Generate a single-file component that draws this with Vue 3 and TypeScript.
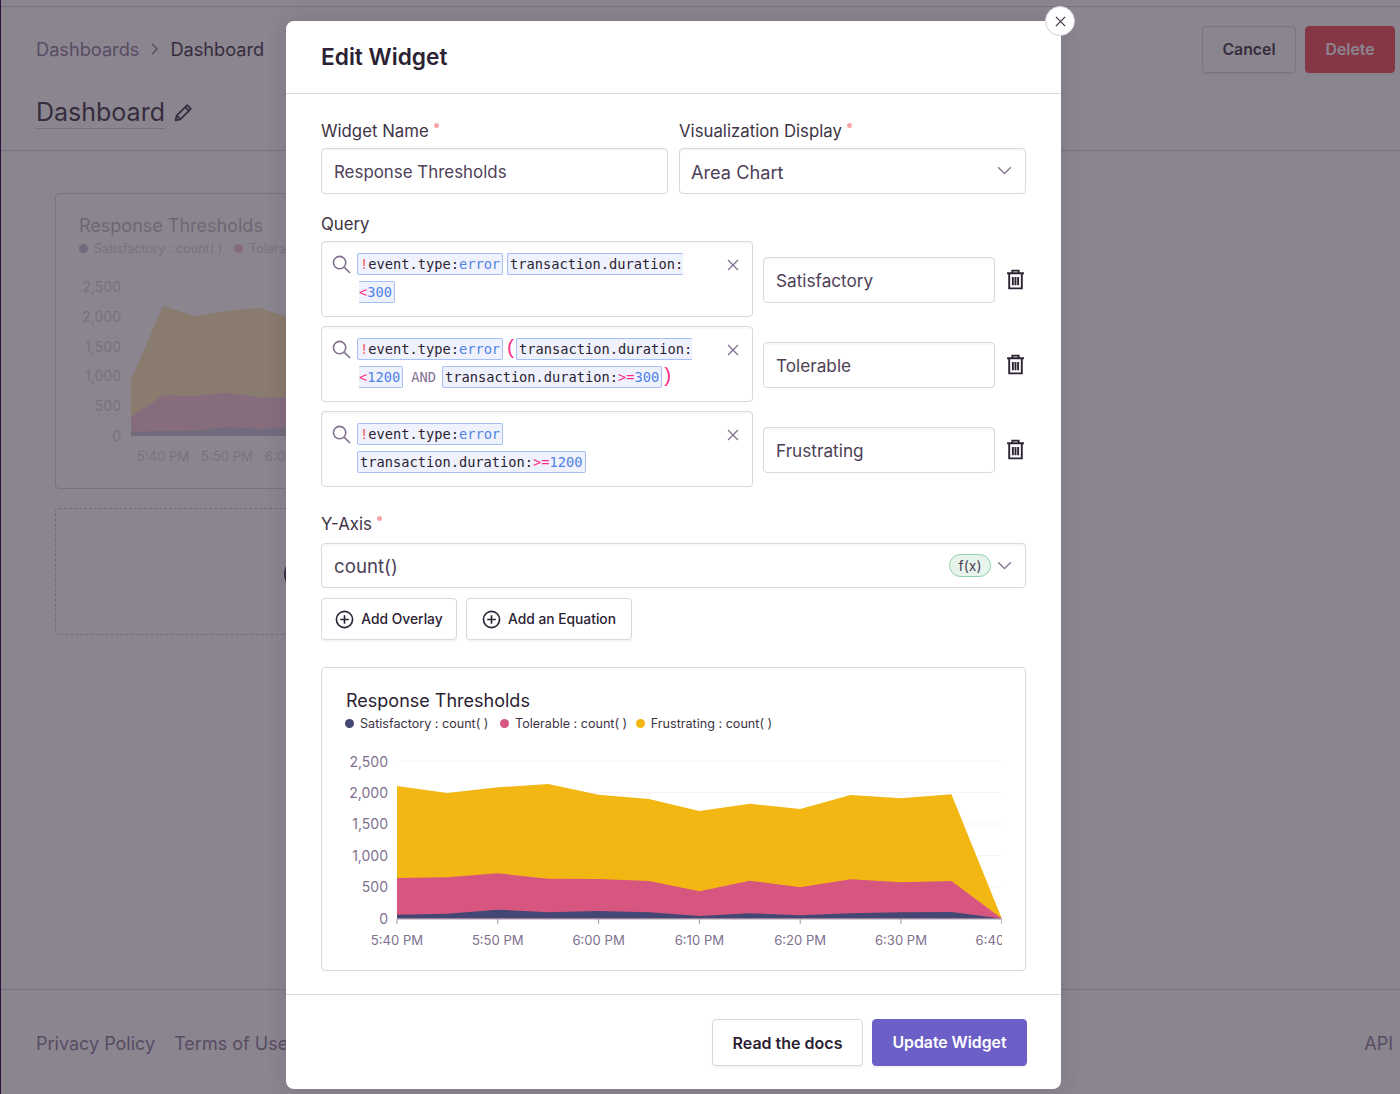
<template>
    <div class="page">
        <header class="top">
            <div class="top-left">
                <div class="crumbs">
                    <span class="crumb-link">Dashboards</span>
                    <svg class="crumb-arrow" viewBox="0 0 10 16"><path d="M2 2l6 6-6 6" /></svg>
                    <span>Dashboard</span>
                </div>
                <div class="title-row">
                    <h1>Dashboard</h1>
                    <svg class="pencil" viewBox="0 0 18 18">
                        <path d="M1.500 16.500l1-4.500L12.500 2l3.500 3.500-10 10z M10.500 4l3.500 3.500 M2.500 12L6 15.500" />
                    </svg>
                </div>
            </div>
            <div class="top-actions">
                <button class="btn cancel">Cancel</button>
                <button class="btn delete">Delete</button>
            </div>
        </header>

        <main class="grid">
            <section class="widget">
                <div class="widget-inner">
                    <div class="widget-title">Response Thresholds</div>
                    <div class="legend small">
                        <span class="dot navy"></span>Satisfactory : count( )
                        <span class="dot pink"></span>Tolerable : count( )
                    </div>
                    <svg class="bg-chart" viewBox="56 268 420 200">
                        <text v-for="(label, i) in yLabels" :key="label" x="121" :y="292 + i * 29.8" text-anchor="end">{{ label }}</text>
                        <polygon class="fill-yellow" :points="area(bgX, bgYellow, 435.7)" />
                        <polygon class="fill-pink" :points="area(bgX, bgPink, 435.7)" />
                        <polygon class="fill-navy" :points="area(bgX, bgNavy, 435.7)" />
                        <text v-for="(label, i) in bgTimes" :key="label" class="time" :x="163 + i * 64" y="461" text-anchor="middle">{{ label }}</text>
                    </svg>
                </div>
            </section>
            <section class="add-widget">
                <span class="add-circle"></span>
            </section>
        </main>

        <footer class="bottom">
            <div class="bottom-links">
                <span>Privacy Policy</span>
                <span>Terms of Use</span>
            </div>
            <span>API</span>
        </footer>

        <div class="overlay"></div>

        <div class="modal">
            <button class="close">
                <svg viewBox="0 0 12 12"><path d="M1 1l10 10M11 1L1 11" /></svg>
            </button>
            <div class="modal-head">Edit Widget</div>

            <div class="modal-body">
                <div class="two-col">
                    <div>
                        <label>Widget Name<i class="req"></i></label>
                        <div class="input name">Response Thresholds</div>
                    </div>
                    <div>
                        <label>Visualization Display<i class="req"></i></label>
                        <div class="input select">
                            Area Chart
                            <svg class="chevron" viewBox="0 0 16 10"><path d="M1 1.500l7 7 7-7" /></svg>
                        </div>
                    </div>
                </div>

                <label class="query-label">Query</label>
                <div class="queries">
                    <div v-for="query in queries" :key="query.name" class="query-row">
                        <div class="query-box">
                            <svg class="search" viewBox="0 0 20 20">
                                <circle cx="8" cy="8" r="6.500" />
                                <path d="M13 13l6 6" />
                            </svg>
                            <div class="query-text">
                                <template v-for="(part, i) in query.parts" :key="i">
                                    <span v-if="part.kind === 'token'" class="token" :class="{ whole: part.whole }"><b v-if="part.neg" class="neg">!</b>{{ part.key }}:<wbr v-if="part.wrap" /><b class="op">{{ part.op }}</b><b class="val">{{ part.value }}</b></span>
                                    <span v-else-if="part.kind === 'logic'" class="logic">{{ part.text }}</span>
                                    <span v-else :class="part.kind">{{ part.text }}</span>
                                    <wbr />
                                </template>
                            </div>
                            <svg class="clear" viewBox="0 0 12 12"><path d="M1 1l10 10M11 1L1 11" /></svg>
                        </div>
                        <div class="input alias">{{ query.name }}</div>
                        <svg class="trash" viewBox="0 0 18 20">
                            <path d="M1 4h16M6 4V1.500h6V4M3 4v14.500h12V4M6.500 7.500v8M9 7.500v8M11.500 7.500v8" />
                        </svg>
                    </div>
                </div>

                <label class="axis-label">Y-Axis<i class="req"></i></label>
                <div class="input select axis">
                    count()
                    <span class="fx">f(x)</span>
                    <svg class="chevron" viewBox="0 0 16 10"><path d="M1 1.500l7 7 7-7" /></svg>
                </div>
                <div class="add-row">
                    <button v-for="text in addButtons" :key="text" class="btn add">
                        <svg viewBox="0 0 20 20">
                            <circle cx="10" cy="10" r="8.500" />
                            <path d="M10 5.500v9M5.500 10h9" />
                        </svg>
                        {{ text }}
                    </button>
                </div>

                <div class="preview">
                    <div class="preview-title">Response Thresholds</div>
                    <div class="legend">
                        <span class="dot navy"></span>Satisfactory : count( )
                        <span class="dot pink"></span>Tolerable : count( )
                        <span class="dot yellow"></span>Frustrating : count( )
                    </div>
                    <svg class="chart" viewBox="322 745 703 215">
                        <defs>
                            <clipPath id="plot-clip"><rect x="322" y="745" width="680" height="215" /></clipPath>
                        </defs>
                        <line v-for="(label, i) in yLabels" :key="label" class="gridline" x1="397" x2="1002" :y1="761 + i * 31.5" :y2="761 + i * 31.5" />
                        <text v-for="(label, i) in yLabels" :key="label + 't'" x="388" :y="766.5 + i * 31.4" text-anchor="end">{{ label }}</text>
                        <polygon class="fill-yellow" :points="area(mainX, mainYellow, 918.5)" />
                        <polygon class="fill-pink" :points="area(mainX, mainPink, 918.5)" />
                        <polygon class="fill-navy" :points="area(mainX, mainNavy, 918.5)" />
                        <line class="axis-line" x1="397" x2="1002" y1="919" y2="919" />
                        <g clip-path="url(#plot-clip)">
                            <template v-for="(label, i) in mainTimes" :key="label">
                                <line class="axis-line" :x1="397 + i * 100.8" :x2="397 + i * 100.8" y1="919" y2="924" />
                                <text class="time" :x="397 + i * 100.8" y="945" text-anchor="middle">{{ label }}</text>
                            </template>
                        </g>
                    </svg>
                </div>
            </div>

            <div class="modal-foot">
                <button class="btn docs">Read the docs</button>
                <button class="btn primary">Update Widget</button>
            </div>
        </div>
    </div>
</template>

<script setup lang="ts">
type Part =
    | { kind: 'token'; neg?: boolean; key: string; op?: string; value: string; wrap?: boolean; whole?: boolean }
    | { kind: 'open' | 'shut' | 'logic'; text: string }

const notError: Part = { kind: 'token', neg: true, key: 'event.type', value: 'error', whole: true }

const queries: { name: string; parts: Part[] }[] = [
    {
        name: 'Satisfactory',
        parts: [notError, { kind: 'token', key: 'transaction.duration', op: '<', value: '300', wrap: true }],
    },
    {
        name: 'Tolerable',
        parts: [
            notError,
            { kind: 'open', text: '(' },
            { kind: 'token', key: 'transaction.duration', op: '<', value: '1200', wrap: true },
            { kind: 'logic', text: 'AND' },
            { kind: 'token', key: 'transaction.duration', op: '>=', value: '300' },
            { kind: 'shut', text: ')' },
        ],
    },
    {
        name: 'Frustrating',
        parts: [notError, { kind: 'token', key: 'transaction.duration', op: '>=', value: '1200', whole: true }],
    },
]

const addButtons = ['Add Overlay', 'Add an Equation']
const yLabels = ['2,500', '2,000', '1,500', '1,000', '500', '0']
const mainTimes = ['5:40 PM', '5:50 PM', '6:00 PM', '6:10 PM', '6:20 PM', '6:30 PM', '6:40 PM']
const bgTimes = ['5:40 PM', '5:50 PM', '6:00 PM']

const mainX = Array.from({ length: 13 }, (_, i) => 397 + i * 50.4)
const mainYellow = [786, 793, 787.3, 784, 794.7, 799, 811, 803.7, 809, 795, 798.3, 794.3, 918.5]
const mainPink = [878, 877.3, 873.3, 878.7, 879, 881, 891.3, 880.7, 887.3, 879.3, 882.3, 881, 918.5]
const mainNavy = [914.7, 913.7, 909.7, 912.3, 911, 912.3, 916, 913.3, 915.3, 913.3, 912.3, 912, 918.5]

const bgX = [131, 163, 195, 227, 259, 291, 323, 355, 387, 419]
const bgYellow = [380, 306, 316, 311, 308, 318, 322, 330, 326, 328]
const bgPink = [417, 395, 396, 392.7, 397.3, 397.3, 399, 405, 398, 402]
const bgNavy = [431.7, 431, 430.7, 427, 429, 428.3, 429, 432, 430, 431]

function area(xs: number[], ys: number[], base: number) {
    const top = xs.map((x, i) => `${x},${ys[i]}`).join(' ')
    return `${xs[0]},${base} ${top} ${xs[xs.length - 1]},${base}`
}
</script>

<style>
html,
body {
    margin: 0;
    overflow: hidden;
    background: #fff;
}
</style>

<style scoped>
.page {
    position: relative;
    display: flex;
    flex-direction: column;
    height: 1094px;
    box-sizing: border-box;
    padding-top: 6px;
    border-left: 1px solid #2c1338;
    overflow: hidden;
    font-family: Inter, "Liberation Sans", sans-serif;
    color: #2b2233;
    background: #fff;
}

.top {
    display: flex;
    justify-content: space-between;
    height: 145px;
    flex: none;
    box-sizing: border-box;
    padding: 19px 5px 0 35px;
    border-top: 1px solid #d5cfdc;
    border-bottom: 1px solid #d5cfdc;
}

.crumbs {
    display: flex;
    align-items: center;
    gap: 11px;
    height: 46px;
    font-size: 18.2px;
}

.crumb-link {
    color: #80708f;
}

.crumb-arrow {
    width: 9px;
    height: 14px;
    fill: none;
    stroke: #80708f;
    stroke-width: 1.5;
}

.title-row {
    display: flex;
    align-items: center;
    gap: 9px;
    margin-top: 24px;
}

h1 {
    margin: 0;
    font-size: 25px;
    font-weight: 400;
    line-height: 32px;
    border-bottom: 1px dotted #a89fb2;
}

.pencil {
    width: 19px;
    height: 19px;
    fill: none;
    stroke: #2b2233;
    stroke-width: 1.7;
    stroke-linejoin: round;
}

.top-actions {
    display: flex;
    gap: 9px;
}

.btn {
    box-sizing: border-box;
    height: 47px;
    border: 1px solid #d5cfdc;
    border-radius: 4px;
    background: #fff;
    color: #2b2233;
    font-family: inherit;
    font-size: 15.8px;
    font-weight: 600;
    box-shadow: 0 2px 1px rgba(37, 11, 54, 0.05);
}

.cancel {
    width: 94px;
}

.delete {
    width: 90px;
    border-color: #f13c44;
    background: #f13c44;
    color: #fff;
}

.grid {
    flex: 1;
    padding: 42px 0 0 54px;
}

.widget {
    box-sizing: border-box;
    width: 440px;
    height: 296px;
    border: 1px solid #d5cfdc;
    border-radius: 4px;
}

.widget-inner {
    padding: 20px 23px 0;
    opacity: 0.35;
}

.widget-title {
    font-size: 18px;
    line-height: 24px;
}

.bg-chart {
    display: block;
    width: 420px;
    height: 200px;
    margin: 11px 0 0 -23px;
    font-size: 14px;
    fill: #80708f;
}

.time {
    font-size: 13.1px;
}

.fill-yellow {
    fill: #f2b712;
}

.fill-pink {
    fill: #d6567f;
}

.fill-navy {
    fill: #444674;
}

.add-widget {
    position: relative;
    box-sizing: border-box;
    width: 440px;
    height: 127px;
    margin-top: 19px;
    border: 1px dashed #c6becf;
    border-radius: 4px;
}

.add-circle {
    position: absolute;
    left: 228px;
    top: 48px;
    width: 30px;
    height: 30px;
    border: 2px solid #2b2233;
    border-radius: 50%;
}

.bottom {
    display: flex;
    justify-content: space-between;
    flex: none;
    height: 105px;
    box-sizing: border-box;
    padding: 2px 7px 0 35px;
    align-items: center;
    border-top: 1px solid #d5cfdc;
    color: #80708f;
    font-size: 18px;
}

.bottom-links {
    display: flex;
    gap: 19px;
}

.overlay {
    position: absolute;
    inset: 0 0 0 -1px;
    background: rgba(62, 52, 70, 0.6);
}

.modal {
    position: absolute;
    left: 285px;
    top: 21px;
    width: 775px;
    height: 1068px;
    display: flex;
    flex-direction: column;
    border-radius: 8px;
    background: #fff;
    box-shadow: 0 0 20px rgba(43, 34, 51, 0.15);
}

.close {
    position: absolute;
    top: -15px;
    right: -14px;
    display: flex;
    align-items: center;
    justify-content: center;
    width: 30px;
    height: 30px;
    padding: 0;
    border: 1px solid #d5cfdc;
    border-radius: 50%;
    background: #fff;
}

.close svg {
    width: 11px;
    height: 11px;
    fill: none;
    stroke: #3e3446;
    stroke-width: 1.3;
}

.modal-head {
    flex: none;
    box-sizing: border-box;
    height: 73px;
    padding: 21px 35px 0;
    border-bottom: 1px solid #dbd6e1;
    font-size: 22.7px;
    font-weight: 600;
    line-height: 30px;
}

.modal-body {
    flex: 1;
    padding: 25px 35px 0;
}

.two-col {
    display: grid;
    grid-template-columns: 347px 347px;
    gap: 11px;
}

label {
    display: block;
    height: 24px;
    font-size: 16.8px;
    line-height: 24px;
    color: #3e3446;
}

.req {
    display: inline-block;
    width: 5px;
    height: 5px;
    margin-left: 5px;
    border-radius: 50%;
    background: #f8a5a8;
    vertical-align: 9px;
}

.input {
    box-sizing: border-box;
    display: flex;
    align-items: center;
    height: 46px;
    margin-top: 5px;
    padding: 1px 12px 0;
    border: 1px solid #dbd6e1;
    border-radius: 4px;
    box-shadow: inset 0 2px 0 rgba(37, 11, 54, 0.03);
    font-size: 17.2px;
    color: #4d4158;
}

.name {
    font-size: 16.9px;
}

.select {
    position: relative;
    padding-left: 11px;
    font-size: 18.2px;
}

.chevron {
    position: absolute;
    right: 13px;
    top: 50%;
    width: 15px;
    height: 9px;
    margin-top: -5px;
    fill: none;
    stroke: #80708f;
    stroke-width: 1.5;
}

.query-label {
    margin-top: 18px;
}

.queries {
    display: flex;
    flex-direction: column;
    gap: 9px;
    margin-top: 5px;
}

.query-row {
    display: flex;
    align-items: center;
}

.query-box {
    position: relative;
    box-sizing: border-box;
    width: 432px;
    height: 76px;
    padding: 8px 0 0 35px;
    border: 1px solid #dbd6e1;
    border-radius: 4px;
    box-shadow: inset 0 2px 0 rgba(37, 11, 54, 0.03);
}

.search {
    position: absolute;
    left: 10px;
    top: 13px;
    width: 19px;
    height: 19px;
    fill: none;
    stroke: #80708f;
    stroke-width: 1.7;
}

.clear {
    position: absolute;
    right: 13px;
    top: 17px;
    width: 12px;
    height: 12px;
    fill: none;
    stroke: #80708f;
    stroke-width: 1.3;
}

.query-text {
    box-sizing: border-box;
    width: 358px;
    padding-left: 2px;
    text-indent: -2px;
    font-family: "DejaVu Sans Mono", monospace;
    font-size: 13.7px;
    line-height: 28px;
    color: #2b2233;
}

.token {
    margin-right: 4px;
    padding: 2px;
    border: 1px solid #a5c0f5;
    border-radius: 2px;
    background: #eff2fc;
}

.whole {
    margin-left: -2px;
}

.query-text .whole:first-child {
    margin-left: 0;
}

.token b {
    font-weight: 400;
}

.neg {
    color: #f55459;
}

.op {
    color: #ff2e8b;
}

.val {
    color: #4f82e6;
}

.open,
.shut {
    font-family: "Liberation Sans", sans-serif;
    font-size: 21px;
    line-height: 20px;
    color: #ff2e8b;
}

.open {
    margin-right: 2px;
}

.shut {
    margin-left: -2px;
}

.logic {
    margin: 0 6px 0 4px;
    color: #80708f;
}

.alias {
    width: 232px;
    margin: 1px 0 0 10px;
}

.trash {
    width: 19px;
    height: 21px;
    margin-left: 11px;
    fill: none;
    stroke: #2b2233;
    stroke-width: 1.8;
}

.axis-label {
    margin-top: 25px;
}

.axis {
    height: 45px;
    margin-top: 7px;
    padding-left: 12px;
    font-size: 18.7px;
}

.fx {
    position: absolute;
    right: 34px;
    top: 10px;
    box-sizing: border-box;
    width: 42px;
    height: 23px;
    border: 1px solid #8ed0a9;
    border-radius: 12px;
    background: #e7f4ec;
    font-size: 14px;
    line-height: 21px;
    text-align: center;
}

.add-row {
    display: flex;
    gap: 9px;
    margin-top: 10px;
}

.add {
    display: flex;
    align-items: center;
    justify-content: center;
    gap: 7px;
    width: 136px;
    height: 42px;
    padding: 0;
    border-color: #dbd6e1;
    font-size: 13.8px;
    font-weight: 500;
}

.add + .add {
    width: 166px;
}

.add svg {
    width: 19px;
    height: 19px;
    fill: none;
    stroke: #2b2233;
    stroke-width: 1.7;
}

.preview {
    box-sizing: border-box;
    height: 304px;
    margin-top: 27px;
    padding: 21px 24px 0;
    border: 1px solid #dbd6e1;
    border-radius: 4px;
}

.preview-title {
    font-size: 18px;
    line-height: 24px;
    color: #2b2233;
}

.legend {
    display: flex;
    align-items: center;
    height: 18px;
    margin-top: 1px;
    white-space: pre;
    font-size: 12.6px;
    color: #3e3446;
}

.preview .legend {
    margin-left: -1px;
}

.small {
    color: #80708f;
}

.dot {
    width: 9px;
    height: 9px;
    margin: 0 6px 0 8px;
    border-radius: 50%;
}

.dot:first-child {
    margin-left: 0;
}

.navy {
    background: #444674;
}

.pink {
    background: #d6567f;
}

.yellow {
    margin-left: 5px;
    background: #f2b712;
}

.chart {
    display: block;
    width: 703px;
    height: 215px;
    margin: 13px 0 0 -24px;
    font-size: 14px;
    fill: #80708f;
}

.gridline {
    stroke: #f5f3f7;
}

.axis-line {
    stroke: #a396b0;
}

.modal-foot {
    display: flex;
    justify-content: flex-end;
    gap: 9px;
    flex: none;
    box-sizing: border-box;
    height: 95px;
    padding: 24px 34px 0;
    border-top: 1px solid #dbd6e1;
}

.docs {
    width: 151px;
    border-color: #dbd6e1;
    font-size: 16px;
}

.primary {
    width: 155px;
    border-color: #6c5fc7;
    background: #6c5fc7;
    color: #fff;
}
</style>
